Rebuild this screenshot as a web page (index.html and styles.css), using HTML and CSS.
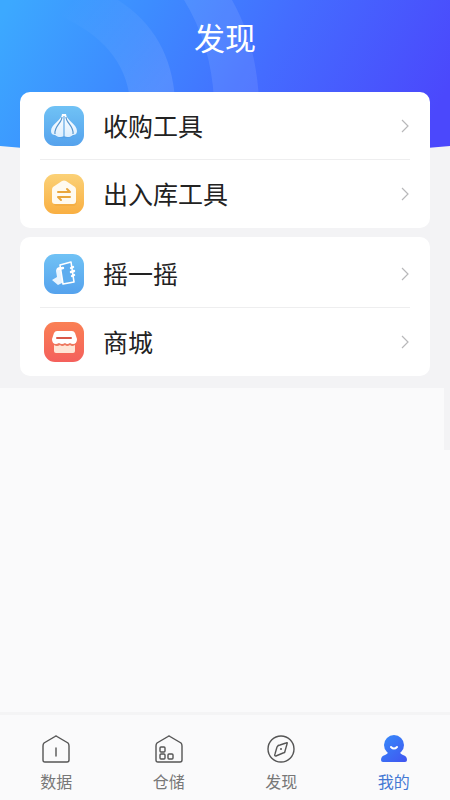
FILE: index.html
```html
<!DOCTYPE html>
<html lang="zh-CN">
<head>
<meta charset="utf-8">
<meta name="viewport" content="width=device-width, initial-scale=1">
<title>发现</title>
<link rel="stylesheet" href="styles.css">
</head>
<body>
<main class="page">
  <section class="discover">
    <svg class="backdrop" viewBox="0 0 450 154" preserveAspectRatio="none" aria-hidden="true">
      <defs>
        <linearGradient id="sky" gradientUnits="userSpaceOnUse" x1="20" y1="-20" x2="400" y2="180">
          <stop offset="0" stop-color="#3ca9ff"/>
          <stop offset=".3" stop-color="#3d8cff"/>
          <stop offset=".6" stop-color="#446cff"/>
          <stop offset="1" stop-color="#4b48fc"/>
        </linearGradient>
        <linearGradient id="ring" gradientUnits="userSpaceOnUse" x1="70" y1="0" x2="165" y2="80">
          <stop offset="0" stop-color="#fff" stop-opacity="0"/>
          <stop offset="1" stop-color="#fff" stop-opacity=".11"/>
        </linearGradient>
      </defs>
      <path fill="url(#sky)" d="M0 0H450V146Q225 168 0 146Z"/>
      <path fill="url(#ring)" d="M60 0H118Q171 34 175 100H130Q124 44 60 16Z"/>
      <path fill="#fff" fill-opacity=".09" d="M184 0H232Q256 42 259 100H214Q211 44 184 0Z"/>
    </svg>
    <h1 class="title">发现</h1>

    <nav class="card" aria-label="工具">
      <a class="row" href="#purchase">
        <svg class="app-icon" viewBox="0 0 40 40" aria-hidden="true">
          <defs><linearGradient id="blue" x1="0" y1="0" x2="0" y2="1"><stop offset="0" stop-color="#70c2f5"/><stop offset="1" stop-color="#55a2ed"/></linearGradient>
          <linearGradient id="clove" x1="0" y1="0" x2="0" y2="1"><stop offset="0" stop-color="#fff"/><stop offset="1" stop-color="#dceefe"/></linearGradient></defs>
          <rect width="40" height="40" rx="11" fill="url(#blue)"/>
          <path fill="#3c87d5" opacity=".25" d="M8 26Q13 33 20 32Q28 33 33 26L24 30H15Z"/>
          <path fill="url(#clove)" d="M18 8h4c0 6 11 10 11 17 0 3-2 4-4 4-2 2-6 3-9 1-3 2-7 1-9-1-2 0-4-1-4-4C7 18 18 14 18 8Z"/>
          <path fill="none" stroke="#5796cf" stroke-width="1.2" d="M18 11c0 6-8 9-7 17M22 11c0 6 8 9 7 17"/>
          <path fill="none" stroke="#62a9e6" stroke-width="1.2" d="M20 10v21"/>
        </svg>
        <span class="label">收购工具</span>
        <svg class="chevron" viewBox="0 0 8 14" aria-hidden="true"><path d="M1 1l6 6-6 6"/></svg>
      </a>
      <a class="row" href="#stock">
        <svg class="app-icon" viewBox="0 0 40 40" aria-hidden="true">
          <defs><linearGradient id="amber" x1="0" y1="0" x2="0" y2="1"><stop offset="0" stop-color="#fbd177"/><stop offset="1" stop-color="#f9af42"/></linearGradient></defs>
          <rect width="40" height="40" rx="11" fill="url(#amber)"/>
          <path fill="#dd8b20" opacity=".18" d="M9 27h24q0 5-4 5H13q-4 0-4-5Z"/>
          <path fill="#fffaf0" d="M18 7q2-1 4 0l9 6q1 1 1 3v11q0 3-3 3H11q-3 0-3-3V16q0-2 1-3Z"/>
          <path fill="none" stroke="#e9a63d" stroke-width="2" stroke-linecap="round" stroke-linejoin="round" d="M14 18h12l-3-3M26 23H14l3 3"/>
        </svg>
        <span class="label">出入库工具</span>
        <svg class="chevron" viewBox="0 0 8 14" aria-hidden="true"><path d="M1 1l6 6-6 6"/></svg>
      </a>
    </nav>

    <nav class="card" aria-label="更多">
      <a class="row" href="#shake">
        <svg class="app-icon" viewBox="0 0 40 40" aria-hidden="true">
          <rect width="40" height="40" rx="11" fill="url(#blue)"/>
          <path fill="#e8f4ff" d="M12 17q0-4 5-4l2 10-1 6-4 2-6-5 5-3Z"/>
          <path fill="#5dadef" stroke="#fff" stroke-width="1.6" stroke-linejoin="round" d="M16 11l11-3 3 20-11 2Z"/>
          <path fill="none" stroke="#fff" stroke-width="2.4" stroke-linecap="round" d="M14 15l5-1M27 14l2-1M27 18l3-1M28 22l2-1"/>
        </svg>
        <span class="label">摇一摇</span>
        <svg class="chevron" viewBox="0 0 8 14" aria-hidden="true"><path d="M1 1l6 6-6 6"/></svg>
      </a>
      <a class="row" href="#mall">
        <svg class="app-icon" viewBox="0 0 40 40" aria-hidden="true">
          <defs><linearGradient id="coral" x1="0" y1="0" x2="0" y2="1"><stop offset="0" stop-color="#fa8054"/><stop offset="1" stop-color="#f4605c"/></linearGradient></defs>
          <rect width="40" height="40" rx="11" fill="url(#coral)"/>
          <path fill="#ffe5d6" d="M10 21h21v8q0 2-2 2H12q-2 0-2-2Z"/>
          <path fill="#ee7960" d="M10 20h21v3q-3 2-5 0-3 2-5 0-3 2-5 0-3 2-6 0Z"/>
          <path fill="#fff" d="M13 9h15q2 0 3 2l2 6q0 5-4 5-2 0-3-1-3 2-5 0-3 2-6 0-2 1-3 1-4 0-4-5l2-6q1-2 3-2Z"/>
          <path stroke="#d95848" stroke-width="2" stroke-linecap="round" d="M13 16h14"/>
        </svg>
        <span class="label">商城</span>
        <svg class="chevron" viewBox="0 0 8 14" aria-hidden="true"><path d="M1 1l6 6-6 6"/></svg>
      </a>
    </nav>
  </section>
  <div class="rest"></div>
</main>

<nav class="tabs" aria-label="主导航">
  <a class="tab" href="#data">
    <svg class="tab-icon" viewBox="0 0 30 30" aria-hidden="true"><path d="M14 2.500q1-1 2 0L27 9q1 1 1 3v14q0 2-2 2H4q-2 0-2-2V12q0-2 1-3ZM15 14v8"/></svg>
    数据
  </a>
  <a class="tab" href="#warehouse">
    <svg class="tab-icon" viewBox="0 0 30 30" aria-hidden="true"><path d="M14 2.500q1-1 2 0L27 9q1 1 1 3v14q0 2-2 2H4q-2 0-2-2V12q0-2 1-3Z"/><rect x="6" y="13" width="5" height="5" rx="1"/><rect x="6" y="20" width="5" height="5" rx="1"/><rect x="14" y="20" width="5" height="5" rx="1"/></svg>
    仓储
  </a>
  <a class="tab" href="#discover">
    <svg class="tab-icon" viewBox="0 0 30 30" aria-hidden="true"><circle cx="15" cy="15" r="13"/><path d="M20 9q2-1 1 1l-2 7q0 2-2 2l-7 3q-2 0-1-2l2-7q1-2 3-2Z"/><circle cx="15" cy="15" r="1" class="dot"/></svg>
    发现
  </a>
  <a class="tab active" href="#me" aria-current="page">
    <svg class="tab-icon" viewBox="0 0 30 30" aria-hidden="true">
      <defs><linearGradient id="person" gradientUnits="userSpaceOnUse" x1="4" y1="2" x2="26" y2="28"><stop offset="0" stop-color="#3689fa"/><stop offset="1" stop-color="#4056f0"/></linearGradient></defs>
      <g class="body" fill="url(#person)">
        <circle cx="15" cy="11" r="10"/>
        <path d="M9 18h12q0 2 3 3 4 1 4 5 0 2-2 2H4q-2 0-2-2 0-4 4-5 3-1 3-3Z"/>
      </g>
      <path class="smile" d="M12 13q3 3 6 0"/>
    </svg>
    我的
  </a>
</nav>
</body>
</html>
```
FILE: styles.css
```css
* {
  box-sizing: border-box;
}

body {
  margin: 0;
  min-height: 100vh;
  display: flex;
  flex-direction: column;
  background: #fafafb;
  font-family: "Noto Sans CJK SC", sans-serif;
  color: #222;
}

a {
  color: inherit;
  text-decoration: none;
}

.page {
  flex: 1;
  display: flex;
  flex-direction: column;
}

.discover {
  position: relative;
  display: flex;
  flex-direction: column;
  gap: 9px;
  padding: 16px 20px 12px;
  background: #f3f3f5;
}

.backdrop {
  position: absolute;
  top: 0;
  left: 0;
  width: 100%;
  height: 154px;
}

.title {
  position: relative;
  margin: 0 0 25px;
  font-size: 31px;
  line-height: 42px;
  font-weight: 400;
  text-align: center;
  color: #fff;
}

.card {
  position: relative;
  padding: 0 20px;
  border-radius: 10px;
  background: #fff;
}

.card + .card {
  padding-top: 3px;
}

.row {
  display: flex;
  align-items: center;
  height: 67px;
  padding: 0 0 0 4px;
}

.row + .row {
  height: 69px;
  border-top: 1px solid #eeeeef;
}

.app-icon {
  width: 40px;
  height: 40px;
}

.label {
  flex: 1;
  margin-left: 19px;
  padding-bottom: 2px;
  font-size: 25px;
  line-height: 36px;
}

.chevron {
  width: 8px;
  height: 14px;
  margin-right: 1px;
  fill: none;
  stroke: #b8b8ba;
  stroke-width: 1.2;
  overflow: visible;
}

.rest {
  width: 6px;
  height: 62px;
  align-self: flex-end;
  background: #f3f3f5;
}

.tabs {
  display: flex;
  padding: 19px 0 7px;
  border-top: 3px solid #f4f4f5;
  background: #fafafb;
}

.tab {
  flex: 1;
  display: flex;
  flex-direction: column;
  align-items: center;
  gap: 5px;
  font-size: 16px;
  line-height: 24px;
  color: #777;
}

.tab-icon {
  width: 30px;
  height: 30px;
  fill: none;
  stroke: #555;
  stroke-width: 1.4;
  stroke-linecap: round;
}

.tab-icon .dot {
  fill: #555;
  stroke: none;
}

.active {
  color: #4478d4;
}

.tab-icon .body {
  stroke: none;
}

.tab-icon .smile {
  stroke: #fff;
  stroke-width: 2;
}
```
